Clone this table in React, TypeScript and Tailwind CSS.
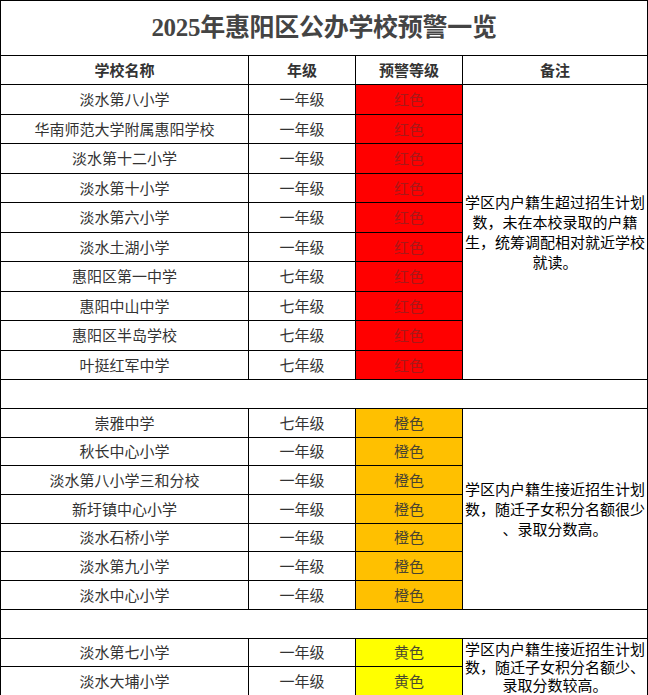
import React from "react";

const red = [
  "淡水第八小学",
  "华南师范大学附属惠阳学校",
  "淡水第十二小学",
  "淡水第十小学",
  "淡水第六小学",
  "淡水土湖小学",
  "惠阳区第一中学",
  "惠阳中山中学",
  "惠阳区半岛学校",
  "叶挺红军中学",
];
const redGrade = ["一年级", "一年级", "一年级", "一年级", "一年级", "一年级", "七年级", "七年级", "七年级", "七年级"];

const orange = [
  ["崇雅中学", "七年级"],
  ["秋长中心小学", "一年级"],
  ["淡水第八小学三和分校", "一年级"],
  ["新圩镇中心小学", "一年级"],
  ["淡水石桥小学", "一年级"],
  ["淡水第九小学", "一年级"],
  ["淡水中心小学", "一年级"],
];

const yellow = [
  ["淡水第七小学", "一年级"],
  ["淡水大埔小学", "一年级"],
];

const cell = "bg-white flex items-center justify-center text-[15px] text-[#333]";

export default function App() {
  return (
    <div
      className="w-[648px] h-[695px] bg-white"
      style={{ fontFamily: '"Noto Sans CJK SC", "Liberation Sans", sans-serif' }}
    >
      <div className="grid grid-cols-[247px_106px_106px_184px] grid-rows-[54px_28px_repeat(10,28.5px)_28px_repeat(7,27.7px)_28px_repeat(2,27.5px)] gap-px p-px bg-black w-[648px]">
        <div
          className="col-span-4 bg-white flex items-center justify-center text-[25px] font-bold text-[#444] tracking-[-0.3px]"
          style={{ fontFamily: '"Liberation Serif", "Noto Sans CJK SC", serif' }}
        >
          2025年惠阳区公办学校预警一览
        </div>
        <div className={cell + " font-bold"}>学校名称</div>
        <div className={cell + " font-bold"}>年级</div>
        <div className={cell + " font-bold"}>预警等级</div>
        <div className={cell + " font-bold"}>备注</div>

        {red.map((n, i) => (
          <React.Fragment key={"r" + i}>
            <div className={cell}>{n}</div>
            <div className={cell}>{redGrade[i]}</div>
            <div className="bg-[#ff0000] flex items-center justify-center text-[15px] text-[#a81818]">红色</div>
            {i === 0 && (
              <div className="row-span-10 bg-white flex items-center justify-center text-center text-[15px] leading-[20px] text-black px-[1px]">
                学区内户籍生超过招生计划数，未在本校录取的户籍生，统筹调配相对就近学校就读。
              </div>
            )}
          </React.Fragment>
        ))}

        <div className="col-span-4 bg-white" />

        {orange.map(([n, g], i) => (
          <React.Fragment key={"o" + i}>
            <div className={cell}>{n}</div>
            <div className={cell}>{g}</div>
            <div className="bg-[#ffc000] flex items-center justify-center text-[15px] text-[#4a4430]">橙色</div>
            {i === 0 && (
              <div className="row-span-7 bg-white flex items-center justify-center text-center text-[15px] leading-[20px] text-black px-[1px] [line-break:anywhere]">
                学区内户籍生接近招生计划数，随迁子女积分名额很少、录取分数高。
              </div>
            )}
          </React.Fragment>
        ))}

        <div className="col-span-4 bg-white" />

        {yellow.map(([n, g], i) => (
          <React.Fragment key={"y" + i}>
            <div className={cell}>{n}</div>
            <div className={cell}>{g}</div>
            <div className="bg-[#ffff00] flex items-center justify-center text-[15px] text-[#4a4a30]">黄色</div>
            {i === 0 && (
              <div className="row-span-2 bg-white flex items-center justify-center text-center text-[15px] leading-[18px] text-black px-[1px]">
                学区内户籍生接近招生计划数，随迁子女积分名额少、录取分数较高。
              </div>
            )}
          </React.Fragment>
        ))}
      </div>
    </div>
  );
}
